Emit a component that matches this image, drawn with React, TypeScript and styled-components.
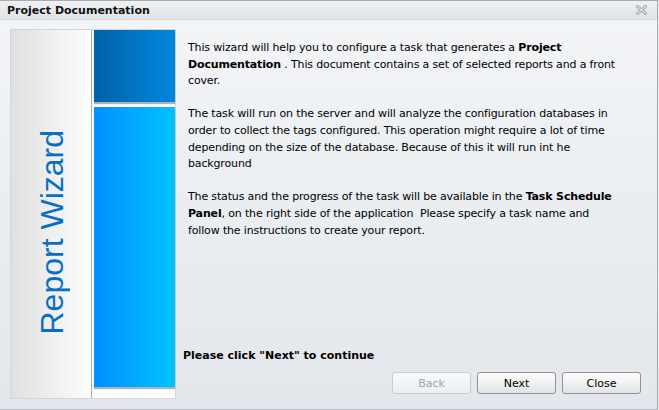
import React from 'react';
import styled, { createGlobalStyle } from 'styled-components';

const GlobalStyle = createGlobalStyle`
  html, body {
    margin: 0;
    padding: 0;
    background: #e9ecef;
  }
`;

const uiFont = `'DejaVu Sans', Tahoma, Verdana, sans-serif`;

function CloseIcon() {
  return (
    <svg width="11" height="10" viewBox="0 0 11 10">
      <path d="M1.5 1.5 L9.5 8.5 M9.5 1.5 L1.5 8.5" stroke="#a9adb1" strokeWidth="3" strokeLinecap="square" />
      <path d="M1.5 1.5 L9.5 8.5 M9.5 1.5 L1.5 8.5" stroke="#f2f3f4" strokeWidth="1" strokeLinecap="square" />
    </svg>
  );
}

function App() {
  return (
    <>
      <GlobalStyle />
      <Window>
        <TitleBar>
          <Title>Project Documentation</Title>
          <CloseButton>
            <CloseIcon />
          </CloseButton>
        </TitleBar>
        <Body>
          <SidePanel>
            <GrayColumn>
              <WizardLabel>Report Wizard</WizardLabel>
            </GrayColumn>
            <BlueColumn>
              <TopBlock />
              <BottomBlock />
            </BlueColumn>
          </SidePanel>
          <Content>
            <Paragraph>
              This wizard will help you to configure a task that generates a <b>Project</b>
              <br />
              <b>Documentation</b> . This document contains a set of selected reports and a front
              <br />
              cover.
            </Paragraph>
            <Paragraph>
              The task will run on the server and will analyze the configuration databases in
              <br />
              order to collect the tags configured. This operation might require a lot of time
              <br />
              depending on the size of the database. Because of this it will run int he
              <br />
              background
            </Paragraph>
            <Paragraph>
              The status and the progress of the task will be available in the <b>Task Schedule</b>
              <br />
              <b>Panel</b>, on the right side of the application&nbsp; Please specify a task name and
              <br />
              follow the instructions to create your report.
            </Paragraph>
            <Hint>Please click "Next" to continue</Hint>
            <ButtonRow>
              <Button disabled>Back</Button>
              <Button>Next</Button>
              <Button>Close</Button>
            </ButtonRow>
          </Content>
        </Body>
      </Window>
    </>
  );
}

const Window = styled.div`
  width: 658px;
  height: 410px;
  box-sizing: border-box;
  display: flex;
  flex-direction: column;
  border-top: 1px solid #a3acb5;
  border-right: 1px solid #a3acb5;
  border-bottom: 1px solid #b4bcc4;
  background: linear-gradient(to bottom, #f3f5f7 0%, #e3e7eb 100%);
  font-family: ${uiFont};
  color: #000;
`;

const TitleBar = styled.div`
  height: 18px;
  display: flex;
  align-items: center;
  justify-content: space-between;
  padding: 0 10px 0 7px;
  background: linear-gradient(to bottom, #eef0f2, #e2e5e8);
  border-bottom: 1px solid #d6dade;
`;

const Title = styled.div`
  font-size: 11px;
  font-weight: 700;
  color: #111;
`;

const CloseButton = styled.div`
  display: flex;
  align-items: center;
`;

const Body = styled.div`
  flex: 1;
  display: flex;
  padding: 9px 16px 10px 10px;
  min-height: 0;
`;

const SidePanel = styled.div`
  width: 166px;
  flex-shrink: 0;
  box-sizing: border-box;
  display: flex;
  border: 1px solid #d3d5d7;
  background: #fff;
`;

const GrayColumn = styled.div`
  width: 80px;
  display: flex;
  flex-direction: column;
  justify-content: flex-end;
  align-items: center;
  padding-bottom: 64px;
  background: linear-gradient(to right, #dfe0e1 0%, #fdfdfd 100%);
  border-right: 1px solid #a9abad;
`;

const WizardLabel = styled.div`
  writing-mode: vertical-rl;
  transform: rotate(180deg);
  font-family: 'Liberation Sans', Arial, sans-serif;
  font-size: 32px;
  line-height: 32px;
  color: #0a6fc1;
  white-space: nowrap;
  margin-left: 2px;
`;

const BlueColumn = styled.div`
  flex: 1;
  display: flex;
  flex-direction: column;
  gap: 5px;
  padding: 0 0 11px 2px;
`;

const TopBlock = styled.div`
  height: 72px;
  background: linear-gradient(to right, #0062a8 0%, #0087de 100%);
  box-shadow: 0 2px 1px rgba(0, 0, 0, 0.3);
`;

const BottomBlock = styled.div`
  flex: 1;
  background: linear-gradient(to right, #0090ff 0%, #00c3ff 100%);
  box-shadow: 0 2px 1px rgba(0, 0, 0, 0.3);
`;

const Content = styled.div`
  flex: 1;
  display: flex;
  flex-direction: column;
  padding: 11px 0 5px 7px;
`;

const Paragraph = styled.p`
  margin: 0 0 16.6px 5px;
  font-size: 11px;
  line-height: 16.6px;
  letter-spacing: -0.15px;
  white-space: nowrap;
`;

const Hint = styled.div`
  margin-top: auto;
  font-size: 11px;
  font-weight: 700;
  line-height: 16px;
`;

const ButtonRow = styled.div`
  display: flex;
  justify-content: flex-end;
  gap: 6px;
  margin-top: 8px;
`;

const Button = styled.button`
  width: 79px;
  height: 22px;
  padding: 0;
  font-family: ${uiFont};
  font-size: 11px;
  color: #000;
  border: 1px solid #8f9397;
  border-radius: 3px;
  background: linear-gradient(to bottom, #fefefe 0%, #f1f1f1 50%, #e2e3e4 100%);

  &:disabled {
    color: #a3a5a7;
    border-color: #c9cdd1;
    background: linear-gradient(to bottom, #f7f8f9, #eceef0);
  }
`;

export default App;
